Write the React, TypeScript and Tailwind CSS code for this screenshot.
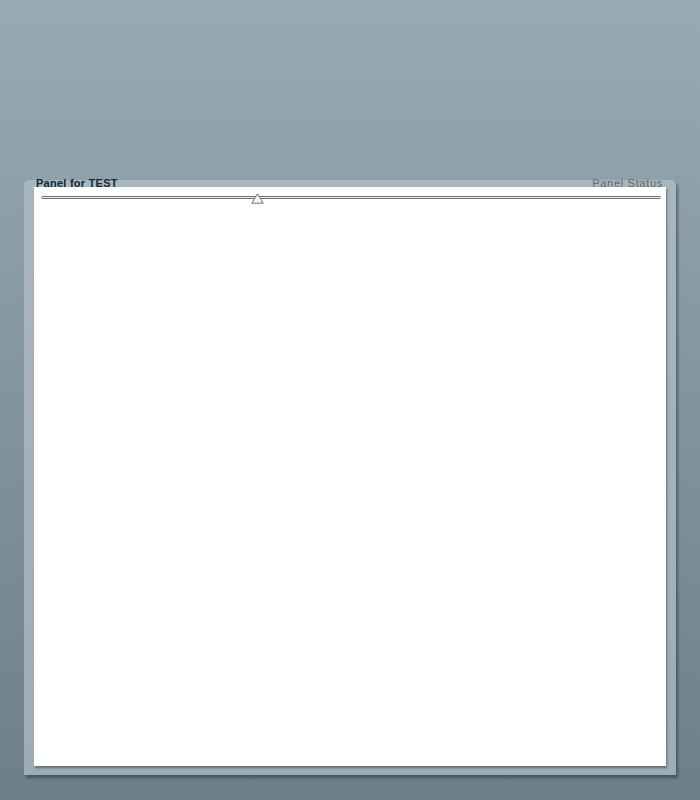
import {useState} from 'react';

function Slider({value}: {value: number}) {
    return (
        <div className="relative mx-[7px] mr-[5px] h-[14px]">
            <div className="absolute left-0 right-0 top-[9px] h-[3px] rounded-full border border-[#6a6f72] bg-[#f2f2f2]"/>
            <svg
                className="absolute top-[6px]"
                style={{left: `calc(${value}% - 6px)`}}
                width="13"
                height="11"
                viewBox="0 0 13 11"
            >
                <path d="M6.5 0.8 L12.2 10.2 L0.8 10.2 Z" fill="#f4f4f4" stroke="#6e7275" strokeWidth="1" strokeLinejoin="round"/>
            </svg>
        </div>
    );
}

export default function App() {
    const [value] = useState(34.8);

    return (
        <div className="min-h-[800px] bg-gradient-to-b from-[#98abb5] to-[#6b808b] px-[24px] pt-[180px] pb-[24px] font-['Liberation_Sans',Arial,sans-serif]">
            <div className="flex flex-col rounded-t-[5px] bg-gradient-to-b from-[#a9b7bd] to-[#9eacb3] px-[10px] pb-[9px] shadow-[2px_3px_3px_rgba(40,55,62,0.55)]">
                <div className="flex h-[7px] items-end justify-between pl-[2px] pr-[3px]">
                    <span className="mb-[-2px] text-[11px] font-bold leading-[11px] tracking-[0.25px] text-[#0d2a35]">Panel for TEST</span>
                    <span className="mb-[-2px] text-[11px] leading-[11px] tracking-[0.7px] text-[#5c6a71]">Panel Status</span>
                </div>
                <div className="relative h-[579px] bg-white shadow-[1px_2px_2px_rgba(60,70,75,0.6)]">
                    <Slider value={value}/>
                </div>
            </div>
        </div>
    );
}
